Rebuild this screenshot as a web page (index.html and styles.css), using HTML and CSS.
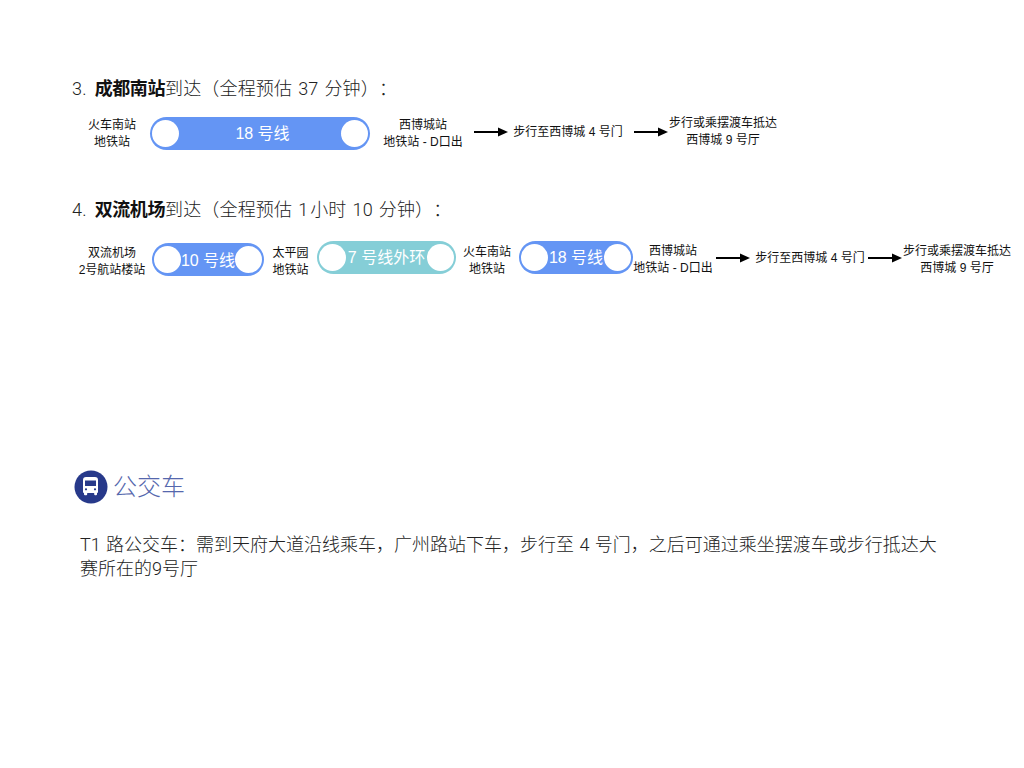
FILE: index.html
```html
<!DOCTYPE html>
<html lang="zh">
<head>
<meta charset="utf-8">
<title>公交车</title>
<link rel="stylesheet" href="styles.css">
</head>
<body>
<main class="slide">
  <section class="block">
    <h2 class="heading">3. <b>成都南站</b>到达（全程预估 37 分钟）：</h2>
    <div class="route route-3">
      <div class="label w-a">火车南站<br>地铁站</div>
      <div class="pill blue pill-long"><i></i><span>18 号线</span><i></i></div>
      <div class="label w-b">西博城站<br>地铁站 - D口出</div>
      <svg class="arrow ml-11 up-3" viewBox="0 0 34 10"><path d="M0 5H25"/><polygon points="24,0.5 34,5 24,9.5"/></svg>
      <div class="label w-c ml-5 up-2">步行至西博城 4 号门</div>
      <svg class="arrow ml-11 up-3" viewBox="0 0 34 10"><path d="M0 5H25"/><polygon points="24,0.5 34,5 24,9.5"/></svg>
      <div class="label w-d ml-1 up-3">步行或乘摆渡车抵达<br>西博城 9 号厅</div>
    </div>
  </section>
  <section class="block block-4">
    <h2 class="heading">4. <b>双流机场</b>到达（全程预估 <span class="tight">1</span> 小时 10 分钟）：</h2>
    <div class="route route-4">
      <div class="label w-a down-4">双流机场<br>2号航站楼站</div>
      <div class="pill blue pill-short"><i></i><span>10 号线</span><i></i></div>
      <div class="label w-e ml-8 down-4">太平园<br>地铁站</div>
      <div class="pill teal pill-mid up-5"><i></i><span>7 号线外环</span><i></i></div>
      <div class="label w-f ml-7 down-2">火车南站<br>地铁站</div>
      <div class="pill blue pill-short2 up-5"><i></i><span>18 号线</span><i></i></div>
      <div class="label w-b">西博城站<br>地铁站 - D口出</div>
      <svg class="arrow ml-3 up-3" viewBox="0 0 34 10"><path d="M0 5H25"/><polygon points="24,0.5 34,5 24,9.5"/></svg>
      <div class="label w-c ml-5 up-3">步行至西博城 4 号门</div>
      <svg class="arrow ml-3 up-3" viewBox="0 0 34 10"><path d="M0 5H25"/><polygon points="24,0.5 34,5 24,9.5"/></svg>
      <div class="label w-d ml-1">步行或乘摆渡车抵达<br>西博城 9 号厅</div>
    </div>
  </section>
  <section class="bus">
    <div class="bus-title">
      <svg class="bus-icon" viewBox="0 0 34 34">
        <circle cx="17" cy="17" r="16.500" fill="#27398a"/>
        <path fill="#fff" fill-rule="evenodd" d="M12 7h9a3 3 0 0 1 3 3v12a1 1 0 0 1-1 1v1.200a1 1 0 0 1-1 1h-.8a1 1 0 0 1-1-1V23h-7v1.200a1 1 0 0 1-1 1H11a1 1 0 0 1-1-1V23a1 1 0 0 1-1-1V10a3 3 0 0 1 3-3zM11 10.500v5.500h11v-5.500zM12 18.200a1.100 1.100 0 1 0 0 2.200 1.100 1.100 0 0 0 0-2.200zM21 18.200a1.100 1.100 0 1 0 0 2.200 1.100 1.100 0 0 0 0-2.200z"/>
      </svg>
      <h1>公交车</h1>
    </div>
    <p class="bus-text">T1 路公交车：需到天府大道沿线乘车，广州路站下车，步行至 4 号门，之后可通过乘坐摆渡车或步行抵达大赛所在的9号厅</p>
  </section>
</main>
</body>
</html>
```

FILE: styles.css
```css
* { box-sizing: border-box; }
html, body { margin: 0; padding: 0; background: #fff; }
body {
  width: 1024px;
  height: 768px;
  overflow: hidden;
  font-family: "Liberation Sans", "Noto Sans CJK SC", sans-serif;
  color: #1a1a1a;
  text-spacing-trim: space-all;
}
.slide { padding: 77px 0 0 72px; }
.heading {
  margin: 0;
  font-family: Roboto, "Noto Sans CJK SC", sans-serif;
  font-size: 18px;
  line-height: 24px;
  font-weight: 300;
  word-spacing: 1.5px;
  letter-spacing: .15px;
  color: #222;
}
.heading b {
  margin-left: 2px;
  font-family: "Liberation Sans", "Noto Sans CJK SC", sans-serif;
  font-weight: 700;
  letter-spacing: -.4px;
  color: #111;
}
.heading .tight { letter-spacing: -4px; }
.block-4 { margin-top: 46px; }
.route { display: flex; align-items: center; height: 37px; }
.route-3 { margin-top: 14px; }
.route-4 { margin-top: 19px; }
.label {
  flex: none;
  font-size: 12px;
  line-height: 17px;
  text-align: center;
  white-space: nowrap;
  color: #111;
}
.w-a { width: 80px; }
.w-b { width: 80px; }
.w-c { width: 110px; }
.w-d { width: 108px; }
.w-e { width: 37px; }
.w-f { width: 48px; }
.pill {
  flex: none;
  height: 33px;
  border-radius: 17px;
  display: flex;
  align-items: center;
  justify-content: space-between;
  padding: 0 2px;
  color: #fff;
  font-size: 16px;
  white-space: nowrap;
}
.pill span { margin: 0 -1px 2px; }
.pill i {
  flex: none;
  width: 27px;
  height: 27px;
  border-radius: 50%;
  background: #fff;
}
.blue { background: #6495f4; }
.teal { background: #85ced7; }
.pill-long { width: 220px; margin-left: -2px; margin-right: 13px; }
.pill-long span { margin: 0 -1px 3px 4px; }
.pill-short { width: 112px; }
.pill-mid { width: 139px; margin-left: 8px; }
.pill-short2 { width: 114px; margin-left: 8px; }
.down-2 { margin-top: 2px; }
.down-4 { margin-top: 4px; }
.up-2 { margin-bottom: 2px; }
.up-3 { margin-bottom: 3px; }
.up-5 { margin-bottom: 5px; }
.arrow { flex: none; width: 34px; height: 10px; }
.arrow path { stroke: #000; stroke-width: 2; fill: none; }
.arrow polygon { fill: #000; }
.ml-1 { margin-left: 1px; }
.ml-3 { margin-left: 3px; }
.ml-5 { margin-left: 5px; }
.ml-7 { margin-left: 7px; }
.ml-8 { margin-left: 8px; }
.ml-11 { margin-left: 11px; }
.bus { margin-top: 192px; }
.bus-title { display: flex; align-items: center; gap: 5px; margin-left: 2px; height: 34px; }
.bus-icon { flex: none; width: 34px; height: 34px; }
.bus-title h1 {
  margin: 0;
  font-size: 24px;
  line-height: 34px;
  font-weight: 300;
  color: #5567ad;
}
.bus-text {
  margin: 29px 0 0 8px;
  width: 864px;
  font-family: Roboto, "Noto Sans CJK SC", sans-serif;
  font-size: 18px;
  line-height: 24px;
  font-weight: 300;
  word-spacing: 1px;
  color: #222;
}
```
